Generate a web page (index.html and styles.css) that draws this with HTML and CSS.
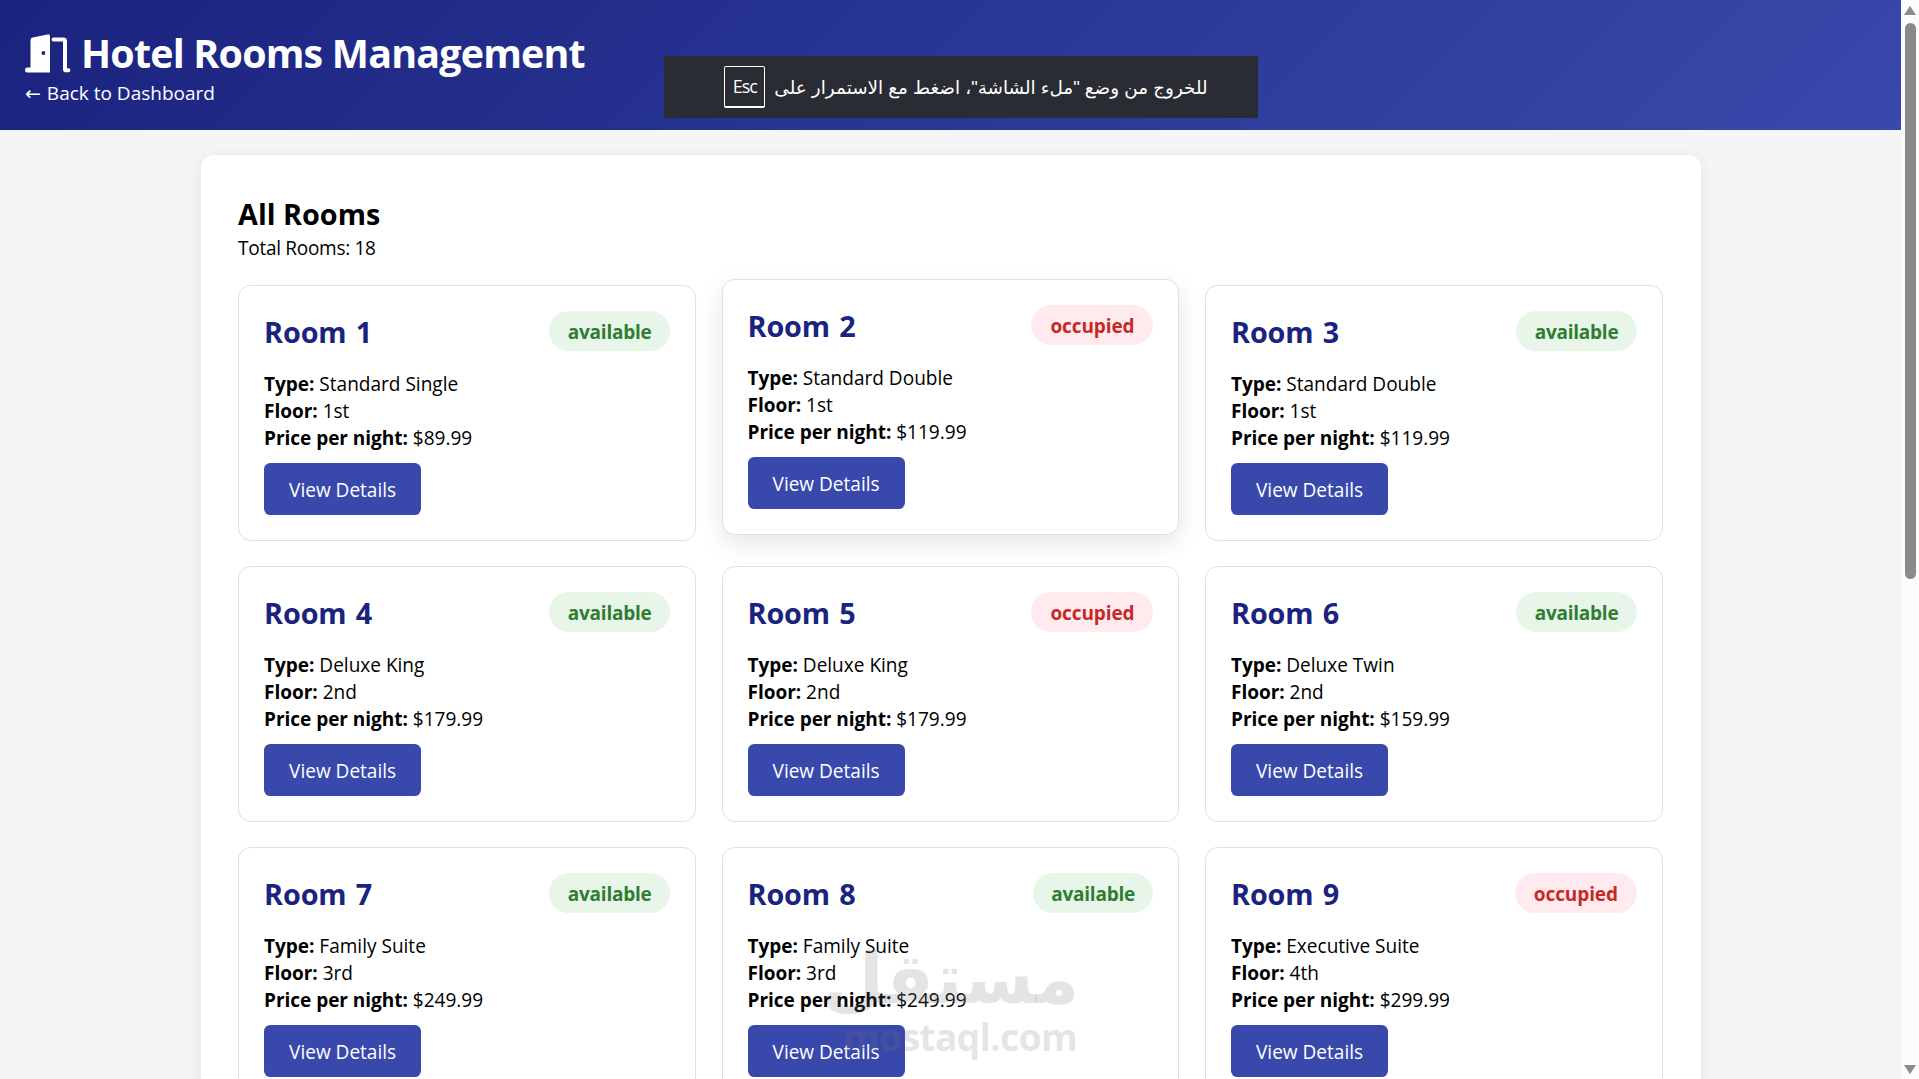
FILE: index.html
```html
<!DOCTYPE html>
<html lang="en">
<head>
<meta charset="utf-8">
<title>Hotel Rooms Management</title>
<link rel="stylesheet" href="styles.css">
</head>
<body>
<div class="viewport">
  <div class="page">
    <header class="top">
      <h1 class="title">
        <svg class="door" viewBox="0 0 46 40" aria-hidden="true">
          <path d="M5.5 34.6V7.2Q5.5 5 7.6 4.6L22.5 1.4Q25 1 25 3.4V39.6H2Q0 39.6 0 37.1T2 34.6Z" fill="#fff"/>
          <circle cx="18.4" cy="20" r="1.9" fill="#1a237e"/>
          <path d="M28.6 6.6H38.2Q40 6.6 40 8.5V36.4Q40 37.2 41 37.2H43.4" fill="none" stroke="#fff" stroke-width="4" stroke-linecap="round" stroke-linejoin="round"/>
        </svg>
        <span>Hotel Rooms Management</span>
      </h1>
      <a class="back" href="#"><span class="back-arrow">←</span> Back to Dashboard</a>
    </header>

    <main class="panel">
      <h2 class="panel-title">All Rooms</h2>
      <p class="total">Total Rooms: 18</p>
      <div class="grid">
        <article class="room">
          <div class="room-head"><h3 class="room-name">Room 1</h3><span class="badge ok">available</span></div>
          <p class="line"><b>Type:</b> Standard Single</p><p class="line"><b>Floor:</b> 1st</p><p class="line"><b>Price per night:</b> $89.99</p>
          <button class="btn">View Details</button>
        </article>
        <article class="room lifted">
          <div class="room-head"><h3 class="room-name">Room 2</h3><span class="badge busy">occupied</span></div>
          <p class="line"><b>Type:</b> Standard Double</p><p class="line"><b>Floor:</b> 1st</p><p class="line"><b>Price per night:</b> $119.99</p>
          <button class="btn">View Details</button>
        </article>
        <article class="room">
          <div class="room-head"><h3 class="room-name">Room 3</h3><span class="badge ok">available</span></div>
          <p class="line"><b>Type:</b> Standard Double</p><p class="line"><b>Floor:</b> 1st</p><p class="line"><b>Price per night:</b> $119.99</p>
          <button class="btn">View Details</button>
        </article>
        <article class="room">
          <div class="room-head"><h3 class="room-name">Room 4</h3><span class="badge ok">available</span></div>
          <p class="line"><b>Type:</b> Deluxe King</p><p class="line"><b>Floor:</b> 2nd</p><p class="line"><b>Price per night:</b> $179.99</p>
          <button class="btn">View Details</button>
        </article>
        <article class="room">
          <div class="room-head"><h3 class="room-name">Room 5</h3><span class="badge busy">occupied</span></div>
          <p class="line"><b>Type:</b> Deluxe King</p><p class="line"><b>Floor:</b> 2nd</p><p class="line"><b>Price per night:</b> $179.99</p>
          <button class="btn">View Details</button>
        </article>
        <article class="room">
          <div class="room-head"><h3 class="room-name">Room 6</h3><span class="badge ok">available</span></div>
          <p class="line"><b>Type:</b> Deluxe Twin</p><p class="line"><b>Floor:</b> 2nd</p><p class="line"><b>Price per night:</b> $159.99</p>
          <button class="btn">View Details</button>
        </article>
        <article class="room">
          <div class="room-head"><h3 class="room-name">Room 7</h3><span class="badge ok">available</span></div>
          <p class="line"><b>Type:</b> Family Suite</p><p class="line"><b>Floor:</b> 3rd</p><p class="line"><b>Price per night:</b> $249.99</p>
          <button class="btn">View Details</button>
        </article>
        <article class="room">
          <div class="room-head"><h3 class="room-name">Room 8</h3><span class="badge ok">available</span></div>
          <p class="line"><b>Type:</b> Family Suite</p><p class="line"><b>Floor:</b> 3rd</p><p class="line"><b>Price per night:</b> $249.99</p>
          <button class="btn">View Details</button>
        </article>
        <article class="room">
          <div class="room-head"><h3 class="room-name">Room 9</h3><span class="badge busy">occupied</span></div>
          <p class="line"><b>Type:</b> Executive Suite</p><p class="line"><b>Floor:</b> 4th</p><p class="line"><b>Price per night:</b> $299.99</p>
          <button class="btn">View Details</button>
        </article>
      </div>
    </main>

    <div class="esc-notice" dir="rtl">
      <span class="esc-text">للخروج من وضع "ملء الشاشة"، اضغط مع الاستمرار على</span>
      <kbd class="esc-key" dir="ltr">Esc</kbd>
    </div>

    <div class="watermark">
      <div class="wm-ar">مستقل</div>
      <div class="wm-en">mostaql.com</div>
    </div>
  </div>

  <div class="scrollbar" aria-hidden="true">
    <span class="arrow-up"></span>
    <span class="thumb"></span>
    <span class="track-rest"></span>
    <span class="arrow-down"></span>
  </div>
</div>
</body>
</html>
```
FILE: styles.css
```css
* { box-sizing: border-box; }
html, body { margin: 0; height: 100%; overflow: hidden; }
body {
  font-family: "Open Sans", "Noto Sans", sans-serif;
  font-size: 19.05px;
  line-height: 27px;
  color: #000;
  background: #f5f5f5;
}
.viewport { display: flex; height: 100vh; }
.page { flex: 1; min-width: 0; position: relative; overflow: hidden; background: #f5f5f5; }

.top {
  height: 130px;
  padding: 26px 25px 0;
  background: linear-gradient(135deg, #1a237e, #3949ab);
  color: #fff;
}
.title {
  margin: 0;
  display: flex;
  align-items: center;
  gap: 10px;
  font-size: 39.4px;
  line-height: 54px;
  font-weight: 700;
  letter-spacing: -0.8px;
}
.door { width: 46px; height: 40px; flex: none; }
.back { display: block; color: #fff; text-decoration: none; font-size: 19px; line-height: 27px; }
.back-arrow { font-family: "DejaVu Sans", sans-serif; margin-right: 1px; }

.panel {
  width: 1500px;
  margin: 25px auto 0;
  padding: 40px 37.6px;
  background: #fff;
  border-radius: 12.8px;
  box-shadow: 0 3px 16px rgba(0, 0, 0, 0.08);
}
.panel-title { margin: 0; font-size: 28.8px; line-height: 38px; font-weight: 700; color: #000; }
.total { margin: 2px 0 23px; letter-spacing: -0.3px; }
.grid { display: grid; grid-template-columns: repeat(3, 1fr); column-gap: 25.6px; row-gap: 24.8px; }

.room {
  background: #fff;
  border: 1px solid #e0e0e0;
  border-radius: 12.8px;
  padding: 25.6px 25px;
}
.lifted {
  transform: translateY(-6px);
  box-shadow: 0 8px 24px rgba(0, 0, 0, 0.1);
}
.room-head { display: flex; justify-content: space-between; align-items: flex-start; margin-bottom: 20.7px; height: 39px; }
.room-name { margin: 1px 0 0; font-size: 28.8px; line-height: 38.4px; font-weight: 700; color: #1a237e; letter-spacing: -0.15px; word-spacing: 2px; }
.badge {
  height: 39.6px;
  margin-top: -0.6px;
  border-radius: 20px;
  font-size: 19px;
  line-height: 43px;
  font-weight: 700;
}
.ok { padding: 0 18.5px; background: #e8f5e9; color: #2e7d32; letter-spacing: -0.25px; }
.busy { padding: 0 19px; background: #ffebee; color: #c62828; letter-spacing: -0.1px; }
.line { margin: 0; }
.line b { font-weight: 700; letter-spacing: -0.05px; }
.btn {
  display: block;
  margin-top: 10.3px;
  width: 157px;
  height: 52px;
  padding: 4px 0 0;
  border: 0;
  border-radius: 6.4px;
  background: #3949ab;
  color: #fff;
  font: inherit;
}

.esc-notice {
  position: absolute;
  left: 664px;
  top: 56px;
  width: 594px;
  height: 62px;
  display: flex;
  align-items: center;
  justify-content: center;
  gap: 9px;
  padding-left: 10px;
  background: #292c33;
  color: #fff;
  font-family: "Liberation Sans", "DejaVu Sans", sans-serif;
  font-size: 18.4px;
}
.esc-key {
  width: 41px;
  height: 42px;
  display: flex;
  align-items: center;
  justify-content: center;
  border: 1px solid #fff;
  border-bottom-width: 2px;
  border-radius: 2px;
  font-family: "Open Sans", sans-serif;
  font-size: 18px;
  letter-spacing: -1px;
}

.watermark {
  position: absolute;
  left: 843px;
  top: 934px;
  width: 230px;
  text-align: center;
  color: rgba(120, 120, 120, 0.2);
  font-family: "DejaVu Sans", sans-serif;
  font-weight: 700;
  pointer-events: none;
}
.wm-ar { margin-left: -20px; font-size: 70px; line-height: 90px; white-space: nowrap; }
.wm-en { margin-top: -7px; font-size: 37.5px; line-height: 40px; letter-spacing: -0.8px; font-family: "Open Sans", sans-serif; }

.scrollbar {
  width: 18px;
  flex: none;
  background: #fbfbfb;
  display: flex;
  flex-direction: column;
  align-items: center;
}
.arrow-up {
  width: 0; height: 0;
  margin-top: 6px;
  border-left: 6.5px solid transparent;
  border-right: 6.5px solid transparent;
  border-bottom: 9px solid #8a8a8a;
}
.thumb { width: 11px; height: 556px; margin-top: 8px; background: #8a8a8a; border-radius: 6px; }
.track-rest { flex: 1; }
.arrow-down {
  width: 0; height: 0;
  margin-bottom: 5px;
  border-left: 6.5px solid transparent;
  border-right: 6.5px solid transparent;
  border-top: 9px solid #8a8a8a;
}
```
